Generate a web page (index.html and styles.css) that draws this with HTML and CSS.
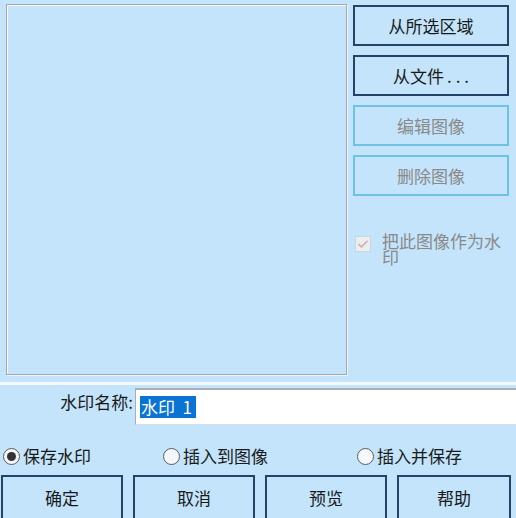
FILE: index.html
```html
<!DOCTYPE html>
<html lang="zh">
<head>
<meta charset="utf-8">
<link rel="stylesheet" href="styles.css">
</head>
<body>
<div class="top">
  <div class="preview"></div>
  <div class="side">
    <div class="btn">从所选区域</div>
    <div class="btn">从文件<span class="dots">...</span></div>
    <div class="btn disabled">编辑图像</div>
    <div class="btn disabled">删除图像</div>
    <div class="check">
      <span class="box"><svg width="12" height="10" viewBox="0 0 12 10"><path d="M1.5 5.2 L4.5 8 L10.5 1.8" fill="none" stroke="#d6a9a4" stroke-width="1.6"/></svg></span>
      <span class="check-text">把此图像作为水印</span>
    </div>
  </div>
</div>
<div class="sep"></div>
<div class="name-row">
  <div class="name-label">水印名称:</div>
  <div class="name-input"><span class="sel">水印  1</span></div>
</div>
<div class="radios">
  <div class="radio"><span class="dot on"></span>保存水印</div>
  <div class="radio"><span class="dot"></span>插入到图像</div>
  <div class="radio"><span class="dot"></span>插入并保存</div>
</div>
<div class="actions">
  <div class="abtn">确定</div>
  <div class="abtn">取消</div>
  <div class="abtn">预览</div>
  <div class="abtn last">帮助</div>
</div>
</body>
</html>
```
FILE: styles.css
```css
html, body {
  margin: 0;
  padding: 0;
}
body {
  width: 516px;
  height: 518px;
  overflow: hidden;
  background: #c3e4fb;
  font-family: "Noto Sans CJK SC", "Noto Sans", sans-serif;
  font-size: 17px;
  color: #1a1a1a;
}
.top {
  display: flex;
  padding: 4px 0 0 6px;
  height: 372px;
}
.preview {
  box-sizing: border-box;
  width: 341px;
  height: 371px;
  border: 1px solid #a3a9ae;
  box-shadow: inset 1px 1px 0 #f4f9fd, 1px 1px 0 #eef6fc;
  background: #c3e4fb;
}
.side {
  margin-left: 6px;
  width: 156px;
  padding-top: 1px;
  display: flex;
  flex-direction: column;
  gap: 9px;
}
.btn {
  box-sizing: border-box;
  height: 41px;
  border: 2px solid #234468;
  display: flex;
  align-items: center;
  justify-content: center;
  line-height: 1;
}
.dots {
  letter-spacing: 4px;
  margin-left: 3px;
  margin-right: -4px;
}
.btn.disabled {
  border-color: #6ec2e2;
  color: #8a8a8a;
}
.check {
  display: flex;
  align-items: flex-start;
  margin-top: 27px;
  padding-left: 2px;
  color: #8a8a8a;
}
.box {
  box-sizing: border-box;
  width: 16px;
  height: 16px;
  margin-top: 4px;
  border: 1px solid #cdd3d7;
  background: #e9eef1;
  display: flex;
  align-items: center;
  justify-content: center;
  flex: none;
}
.check-text {
  margin-left: 11px;
  width: 122px;
  line-height: 16px;
  padding-top: 1px;
}
.sep {
  margin-top: 6px;
  height: 3px;
  background: #f3f9fd;
}
.name-row {
  display: flex;
  align-items: stretch;
  margin-top: 3px;
  height: 37px;
}
.name-label {
  width: 133px;
  text-align: right;
  line-height: 28px;
}
.name-input {
  flex: 1;
  margin-left: 2px;
  background: #fff;
  border-top: 2px solid #a7aeb4;
  border-left: 1px solid #a7aeb4;
  border-bottom: 1px solid #d4dde3;
  display: flex;
  align-items: center;
  padding-left: 4px;
}
.sel {
  background: #0a74d4;
  color: #fff;
  white-space: pre;
  line-height: 22px;
  padding: 0 4px 0 1px;
}
.radios {
  display: grid;
  grid-template-columns: 160px 194px 1fr;
  padding-left: 3px;
  margin-top: 21px;
  height: 20px;
  align-items: center;
}
.radio {
  display: flex;
  align-items: center;
  line-height: 20px;
}
.dot {
  box-sizing: border-box;
  width: 17px;
  height: 17px;
  border-radius: 50%;
  border: 1px solid #5a5a5a;
  background: #f4f8fb;
  margin-right: 3px;
  display: flex;
  align-items: center;
  justify-content: center;
}
.dot.on::after {
  content: "";
  width: 9px;
  height: 9px;
  border-radius: 50%;
  background: #333;
}
.actions {
  display: flex;
  gap: 10px;
  padding-left: 1px;
  margin-top: 9px;
}
.abtn {
  box-sizing: border-box;
  width: 122px;
  height: 48px;
  border: 2px solid #234468;
  display: flex;
  align-items: center;
  justify-content: center;
  padding-bottom: 4px;
}
.abtn.last {
  width: 114px;
}
```
